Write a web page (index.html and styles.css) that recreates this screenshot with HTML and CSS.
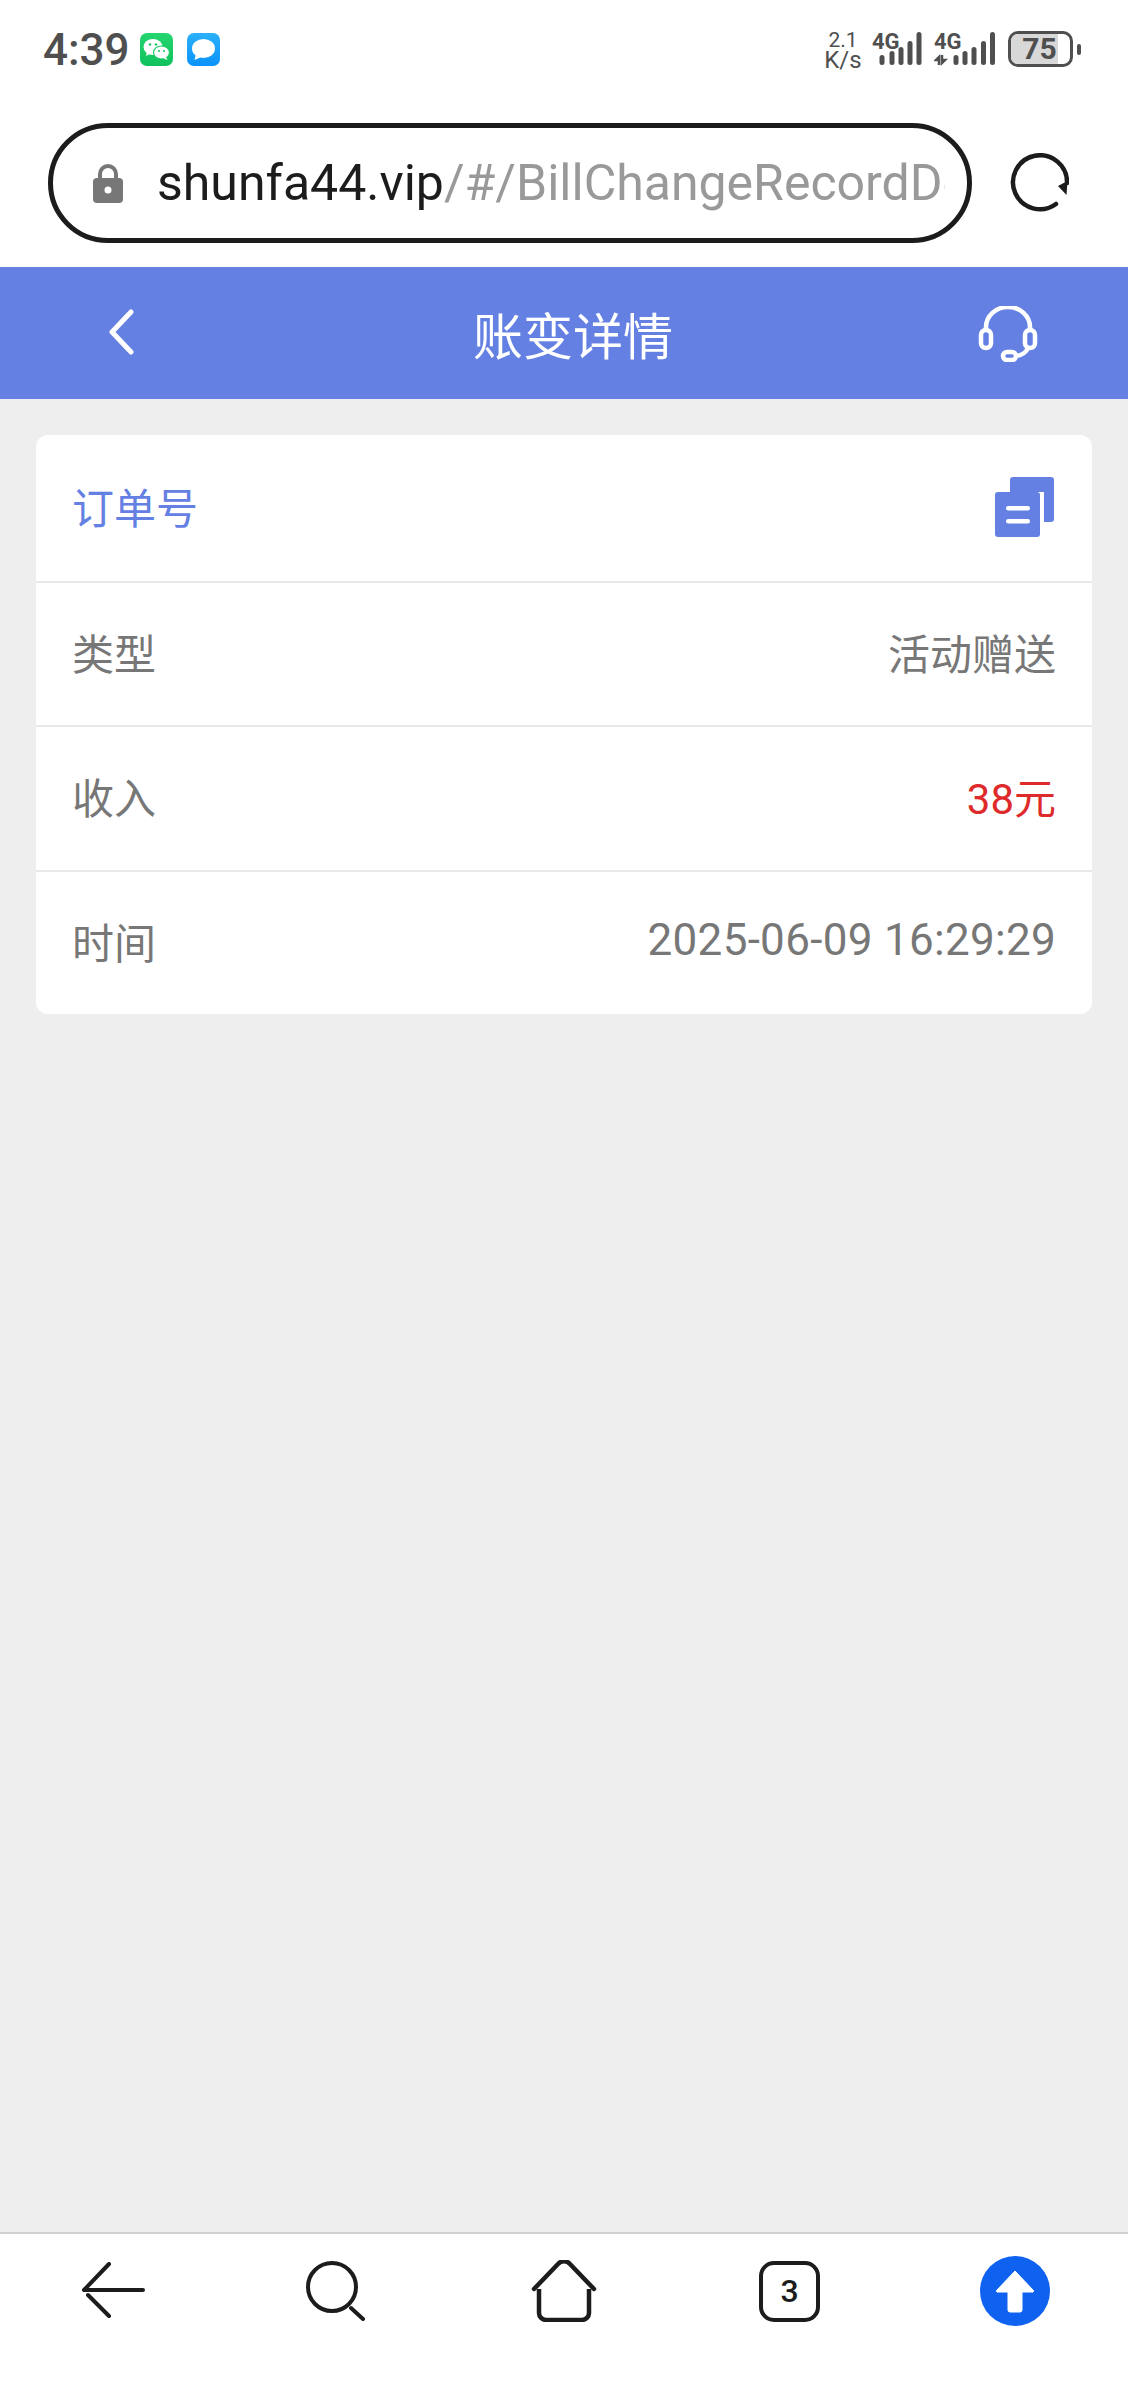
FILE: index.html
```html
<!DOCTYPE html>
<html>
<head>
    <title>账变详情</title>
    <link rel="stylesheet" href="styles.css">
</head>
<body>
    <div class="status-bar">
        <div class="status-left">
            <span class="clock">4:39</span>
            <svg class="app-icon wechat" width="33" height="33" viewBox="0 0 33 33">
                <defs>
                    <linearGradient id="wechatBg" x1="0" y1="0" x2="0" y2="1">
                        <stop offset="0" stop-color="#25d56f"/>
                        <stop offset="1" stop-color="#0fc15c"/>
                    </linearGradient>
                </defs>
                <rect width="33" height="33" rx="7" fill="url(#wechatBg)"/>
                <ellipse cx="13" cy="14" rx="9.5" ry="8" fill="#fff"/>
                <path d="M7 19l-1 4 4.500-2.500z" fill="#fff"/>
                <ellipse cx="21.500" cy="19.500" rx="8" ry="6.500" fill="#fff" stroke="#1bcb66" stroke-width="1.200"/>
                <path d="M26 24l1.500 3-4-1.500z" fill="#fff"/>
                <circle cx="10" cy="11.500" r="1.300" fill="#1bcb66"/>
                <circle cx="16" cy="11.500" r="1.300" fill="#1bcb66"/>
                <circle cx="19" cy="18" r="1.100" fill="#1bcb66"/>
                <circle cx="24" cy="18" r="1.100" fill="#1bcb66"/>
            </svg>
            <svg class="app-icon message" width="33" height="33" viewBox="0 0 33 33">
                <defs>
                    <linearGradient id="msgBg" x1="0" y1="0" x2="0" y2="1">
                        <stop offset="0" stop-color="#2bb0f8"/>
                        <stop offset="1" stop-color="#0b93fb"/>
                    </linearGradient>
                </defs>
                <rect width="33" height="33" rx="7" fill="url(#msgBg)"/>
                <ellipse cx="16.500" cy="15.500" rx="11.500" ry="9.500" fill="#fff"/>
                <path d="M9 20.500l-1.500 6.500 7-3z" fill="#fff"/>
            </svg>
        </div>
        <div class="status-right">
            <div class="speed">
                <span>2.1</span>
                <span class="speed-unit">K/s</span>
            </div>
            <svg class="signal" width="50" height="36" viewBox="0 0 50 36">
                <text x="0" y="17" class="net-label">4G</text>
                <rect x="7.500" y="23" width="5" height="10" rx="2.500"/>
                <rect x="17.500" y="19" width="5" height="14" rx="2.500"/>
                <rect x="26.500" y="15" width="5" height="18" rx="2.500"/>
                <rect x="35.500" y="9" width="5" height="24" rx="2.500"/>
                <rect x="44.500" y="0" width="5" height="33" rx="2.500"/>
            </svg>
            <svg class="signal second" width="62" height="36" viewBox="0 0 62 36">
                <text x="0" y="17" class="net-label">4G</text>
                <path d="M5 33v-8l-3 3h3M8 23v8l3-3h-3" class="net-arrows"/>
                <rect x="19.500" y="23" width="5" height="10" rx="2.500"/>
                <rect x="28.500" y="19" width="5" height="14" rx="2.500"/>
                <rect x="37.500" y="15" width="5" height="18" rx="2.500"/>
                <rect x="47" y="9" width="5" height="24" rx="2.500"/>
                <rect x="56" y="0" width="5" height="33" rx="2.500"/>
            </svg>
            <div class="battery">
                <div class="battery-body">
                    <div class="battery-fill"></div>
                    <span class="battery-num">75</span>
                </div>
                <div class="battery-nub"></div>
            </div>
        </div>
    </div>

    <div class="url-row">
        <div class="url-bar">
            <svg class="lock" width="30" height="39" viewBox="0 0 30 39">
                <path d="M7 17v-7a8 8 0 0 1 16 0v7" fill="none" stroke="#777" stroke-width="4"/>
                <rect x="0" y="14" width="30" height="25" rx="4" fill="#777"/>
                <circle cx="15" cy="26" r="3.500" fill="#fff"/>
            </svg>
            <div class="url-text"><span class="url-host">shunfa44.vip</span><span class="url-path">/#/BillChangeRecordDe</span></div>
        </div>
        <svg class="reload" width="60" height="60" viewBox="0 0 60 60">
            <path d="M47 51a27 27 0 1 1 11-21" fill="none" stroke="#1c1c1c" stroke-width="4.500" stroke-linecap="round"/>
            <path d="M49 33l9.500-5-1 14z" fill="#1c1c1c"/>
        </svg>
    </div>

    <div class="top-nav">
        <svg class="nav-back" width="28" height="46" viewBox="0 0 28 46">
            <path d="M23 3L4 23l19 20" fill="none" stroke="#fff" stroke-width="5" stroke-linecap="round" stroke-linejoin="round"/>
        </svg>
        <h1 class="nav-title">账变详情</h1>
        <svg class="nav-service" width="60" height="56" viewBox="0 0 60 56">
            <path d="M8 25v-4a22 20 0 0 1 44 0v4" fill="none" stroke="#fff" stroke-width="4.500"/>
            <rect x="3" y="24" width="10" height="18" rx="5" fill="none" stroke="#fff" stroke-width="4.500"/>
            <rect x="47" y="24" width="10" height="18" rx="5" fill="none" stroke="#fff" stroke-width="4.500"/>
            <path d="M50 42c-2 5-8 8-16 9" fill="none" stroke="#fff" stroke-width="4.500"/>
            <rect x="25" y="46" width="13" height="8" rx="4" fill="#6480e2" stroke="#fff" stroke-width="4.500"/>
        </svg>
    </div>

    <div class="content">
        <div class="card">
            <div class="row row-order">
                <span class="order-label">订单号</span>
                <svg class="copy-icon" width="60" height="60" viewBox="0 0 60 60">
                    <path d="M15 3a3 3 0 0 1 3-3h38a3 3 0 0 1 3 3v39a3 3 0 0 1-3 3h-7V15H15z" fill="#6480e2"/>
                    <rect x="0" y="15" width="45" height="45" rx="3" fill="#6480e2"/>
                    <rect x="11" y="29" width="24" height="4.500" rx="2.250" fill="#fff"/>
                    <rect x="11" y="42" width="24" height="4.500" rx="2.250" fill="#fff"/>
                </svg>
            </div>
            <div class="row row-type">
                <span class="label">类型</span>
                <span class="value">活动赠送</span>
            </div>
            <div class="row">
                <span class="label">收入</span>
                <span class="value income">38元</span>
            </div>
            <div class="row row-last">
                <span class="label">时间</span>
                <span class="value">2025-06-09 16:29:29</span>
            </div>
        </div>
    </div>

    <div class="bottom-bar">
        <div class="tool">
            <svg width="64" height="58" viewBox="0 0 64 58">
                <path d="M62 28H3M28 2L3 28M28 54L7 33" fill="none" stroke="#1c1c1c" stroke-width="4" stroke-linecap="round" stroke-linejoin="round"/>
            </svg>
        </div>
        <div class="tool tool-search">
            <svg width="60" height="60" viewBox="0 0 60 60">
                <circle cx="26" cy="26" r="24" fill="none" stroke="#1c1c1c" stroke-width="4"/>
                <path d="M45 47l12 11" fill="none" stroke="#1c1c1c" stroke-width="4" stroke-linecap="round"/>
            </svg>
        </div>
        <div class="tool">
            <svg width="66" height="62" viewBox="0 0 66 62">
                <path d="M3 29L27 4a8 8 0 0 1 12 0l24 25" fill="none" stroke="#1c1c1c" stroke-width="4.500" stroke-linecap="round"/>
                <path d="M8 29v24a7 7 0 0 0 7 7h36a7 7 0 0 0 7-7V29" fill="none" stroke="#1c1c1c" stroke-width="4.500"/>
            </svg>
        </div>
        <div class="tool">
            <div class="tab-count">3</div>
        </div>
        <div class="tool">
            <svg width="70" height="70" viewBox="0 0 70 70">
                <circle cx="35" cy="35" r="35" fill="#0f62f0"/>
                <path d="M35 15L17 34a1 1 0 0 0 1 2h10v18a2 2 0 0 0 2 2h10a2 2 0 0 0 2-2V36h10a1 1 0 0 0 1-2z" fill="#fff" stroke="#fff" stroke-width="1" stroke-linejoin="round"/>
            </svg>
        </div>
    </div>
</body>
</html>
```

FILE: styles.css
```css
* {
    box-sizing: border-box;
}

body {
    margin: 0;
    height: 2400px;
    display: flex;
    flex-direction: column;
    font-family: Roboto, "Noto Sans CJK SC", sans-serif;
    background-color: #eeeeee;
}

.status-bar {
    height: 100px;
    background-color: #fff;
    display: flex;
    justify-content: space-between;
    padding: 31px 47px 0 43px;
    color: #4f4f4f;
}

.status-left {
    display: flex;
    align-items: flex-start;
}

.clock {
    font-size: 44px;
    font-weight: 500;
    line-height: 38px;
    width: 97px;
}

.app-icon {
    margin-top: 2px;
}

.app-icon.message {
    margin-left: 14px;
}

.status-right {
    display: flex;
    align-items: flex-start;
}

.speed {
    width: 38px;
    display: flex;
    flex-direction: column;
    align-items: center;
    font-size: 21px;
    line-height: 19px;
    margin-top: 0;
    margin-right: 10px;
}

.speed-unit {
    font-size: 24px;
    line-height: 20px;
}

.signal {
    fill: #4f4f4f;
    margin-top: 1px;
    margin-right: 12px;
}

.net-label {
    font-family: Roboto, sans-serif;
    font-size: 22px;
    font-weight: 700;
}

.net-arrows {
    fill: none;
    stroke: #4f4f4f;
    stroke-width: 2.5;
}

.battery {
    display: flex;
    align-items: center;
}

.battery-body {
    position: relative;
    width: 65px;
    height: 36px;
    border: 3px solid #4f4f4f;
    border-radius: 10px;
    overflow: hidden;
    display: flex;
    align-items: center;
    justify-content: center;
}

.battery-fill {
    position: absolute;
    left: 0;
    top: 0;
    bottom: 0;
    width: 47px;
    background-color: #d8d8d8;
}

.battery-num {
    position: relative;
    font-size: 30px;
    font-weight: 700;
    line-height: 30px;
    margin-right: 2px;
}

.battery-nub {
    width: 4px;
    height: 11px;
    margin-left: 4px;
    border-radius: 2px;
    background-color: #4f4f4f;
}

.url-row {
    height: 167px;
    background-color: #fff;
    display: flex;
    align-items: flex-start;
    padding: 23px 0 0 48px;
}

.url-bar {
    width: 924px;
    height: 120px;
    border: 5px solid #1c1c1c;
    border-radius: 60px;
    display: flex;
    align-items: center;
    padding: 0 22px 0 40px;
}

.lock {
    flex-shrink: 0;
    margin-right: 34px;
}

.url-text {
    font-size: 50px;
    white-space: nowrap;
    overflow: hidden;
}

.url-host {
    color: #1c1c1c;
}

.url-path {
    color: #999;
}

.reload {
    margin: 30px 0 0 37px;
}

.top-nav {
    height: 132px;
    background-color: #6480e2;
    display: grid;
    grid-template-columns: 1fr auto 1fr;
    align-items: center;
    padding: 0 90px 0 108px;
}

.nav-title {
    margin: 0;
    color: #fff;
    font-size: 50px;
    font-weight: 400;
}

.nav-service {
    justify-self: end;
    margin-top: 2px;
}

.nav-back {
    margin-top: -2px;
}

.content {
    flex: 1;
    padding: 36px 36px 0;
}

.card {
    background-color: #fff;
    border-radius: 12px;
}

.row {
    height: 145px;
    padding: 0 36px;
    display: flex;
    justify-content: space-between;
    align-items: center;
    border-bottom: 2px solid #e8e8e8;
    font-size: 42px;
    color: #777;
}

.row-order {
    height: 148px;
}

.row-type {
    height: 144px;
}

.row-last {
    height: 142px;
    border-bottom: none;
}

.order-label {
    color: #6480e2;
    margin-bottom: 6px;
}

.label,
.value {
    margin-bottom: 6px;
}

.copy-icon {
    margin-right: 1px;
    margin-bottom: 2px;
}

.value {
    font-size: 42px;
}

.row-last .value {
    font-size: 44px;
    letter-spacing: 0.3px;
}

.income {
    color: #de2a2a;
}

.bottom-bar {
    height: 168px;
    background-color: #fff;
    border-top: 2px solid #d0d0d0;
    display: grid;
    grid-template-columns: repeat(5, 1fr);
    align-items: center;
    padding-bottom: 52px;
}

.tool {
    display: flex;
    justify-content: center;
}

.tool-search {
    padding-right: 4px;
}

.tab-count {
    width: 61px;
    height: 61px;
    border: 4.5px solid #1c1c1c;
    border-radius: 15px;
    display: flex;
    align-items: center;
    justify-content: center;
    color: #1c1c1c;
    font-size: 32px;
    font-weight: 500;
}
```
